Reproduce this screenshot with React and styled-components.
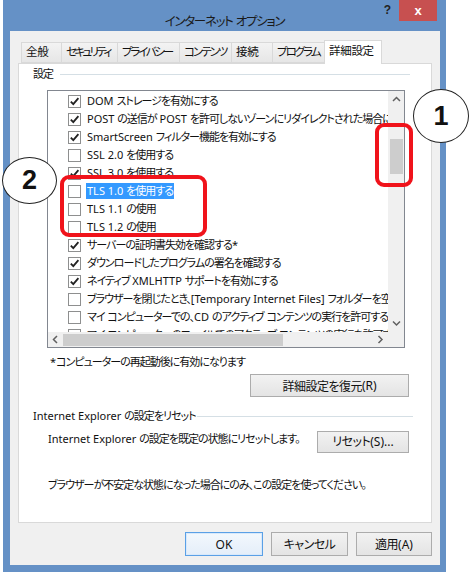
import React from 'react';
import styled, { createGlobalStyle } from 'styled-components';

const GlobalStyle = createGlobalStyle`
  body {
    margin: 0;
    background: #fff;
    font-family: 'Noto Sans', 'Noto Sans CJK JP', sans-serif;
    font-feature-settings: 'palt';
    color: #111;
  }
`;

const Stage = styled.div`
  position: relative;
  width: 473px;
  height: 574px;
  overflow: hidden;
  background: #fff;
`;

const Window = styled.div`
  margin-left: 3px;
  width: 443px;
  height: 572px;
  background: #6591c6;
  display: flex;
  flex-direction: column;
  padding-bottom: 7px;
  box-sizing: border-box;
`;

const TitleBar = styled.div`
  height: 31px;
  display: grid;
  grid-template-columns: 1fr auto 1fr;
  align-items: start;
`;

const Title = styled.div`
  grid-column: 2;
  padding-top: 13px;
  font-size: 12.5px;
  --jp: -1.3px;
  line-height: 18px;
  color: #1a1a1a;
`;

const Controls = styled.div`
  grid-column: 3;
  justify-self: end;
  display: flex;
  align-items: flex-start;
  gap: 8px;
  padding-right: 9px;
`;

const HelpGlyph = styled.span`
  font-family: 'Liberation Sans', sans-serif;
  font-weight: bold;
  font-size: 12px;
  line-height: 20px;
  color: #222;
`;

const CloseButton = styled.div`
  width: 38px;
  height: 21px;
  background: #c75050;
  color: #fff;
  display: flex;
  align-items: center;
  justify-content: center;
  font-family: 'Liberation Sans', sans-serif;
  font-weight: bold;
  font-size: 13px;
`;

const Jp = styled.span`
  letter-spacing: var(--jp, -1px);
`;

const Body = styled.div`
  flex: 1;
  margin: 0 6px 0 7px;
  background: #f0f0f0;
  padding: 9px 8px 9px 8px;
  display: flex;
  flex-direction: column;
  font-size: 11px;
`;

const TabRow = styled.div`
  height: 23px;
  display: flex;
  align-items: flex-end;
  padding-left: 4px;
  position: relative;
  z-index: 1;
`;

const Tab = styled.div`
  width: ${p => p.$w}px;
  height: ${p => (p.$active ? 24 : 21)}px;
  box-sizing: border-box;
  border: 1px solid #d9d9d9;
  border-bottom: ${p => (p.$active ? 'none' : '1px solid #d9d9d9')};
  margin-left: -1px;
  margin-bottom: ${p => (p.$active ? '-1px' : '0')};
  background: ${p => (p.$active ? '#fff' : 'linear-gradient(#f3f3f3, #e6e6e6)')};
  font-size: 11.5px;
  --jp: ${p => p.$track}px;
  line-height: ${p => (p.$active ? 20 : 18)}px;
  padding-left: 4px;
  white-space: nowrap;
`;

const Panel = styled.div`
  height: 460px;
  box-sizing: border-box;
  border: 1px solid #d9d9d9;
  background: #fff;
  display: flex;
  flex-direction: column;
  padding-top: 2px;
`;

const GroupHeader = styled.div`
  display: flex;
  align-items: center;
  gap: ${p => p.$gap || 7}px;
  padding-left: 14px;
  margin-right: ${p => p.$right}px;
  margin-top: ${p => p.$top || 0}px;
  line-height: 16px;
  white-space: nowrap;
  &::after {
    content: '';
    flex: 1;
    height: 1px;
    background: #d5dfe5;
  }
`;

const ListBox = styled.div`
  margin: 8px 0 0 28px;
  width: 358px;
  height: 258px;
  box-sizing: border-box;
  border: 1px solid #828790;
  display: grid;
  grid-template-columns: 1fr 16px;
  grid-template-rows: 1fr 15px;
  overflow: hidden;
`;

const Viewport = styled.div`
  overflow: hidden;
  padding: 1px 0 0 20px;
`;

const Row = styled.div`
  height: 18px;
  display: flex;
  align-items: center;
  gap: 5px;
  white-space: nowrap;
`;

const Box = styled.span`
  flex: none;
  width: 13px;
  height: 13px;
  box-sizing: border-box;
  border: 1px solid #8e8f8f;
  background: #fff;
  display: flex;
  align-items: center;
  justify-content: center;
`;

const Label = styled.span`
  line-height: 16px;
  padding: 0 1px;
  background: ${p => (p.$selected ? '#3399ff' : 'transparent')};
  color: ${p => (p.$selected ? '#fff' : '#111')};
`;

const VScroll = styled.div`
  background: #f0f0f0;
  display: flex;
  flex-direction: column;
  align-items: center;
`;

const HScroll = styled.div`
  background: #f0f0f0;
  display: flex;
  align-items: center;
`;

const Corner = styled.div`
  background: #f0f0f0;
`;

const ArrowCell = styled.div`
  flex: none;
  width: ${p => p.$w}px;
  height: ${p => p.$h}px;
  display: flex;
  align-items: center;
  justify-content: center;
`;

const Spacer = styled.div`
  flex: 1;
`;

const VThumb = styled.div`
  width: 13px;
  height: 35px;
  margin-top: 31px;
  background: #cdcdcd;
`;

const HThumb = styled.div`
  width: 220px;
  height: 12px;
  background: #cdcdcd;
`;

const Note = styled.div`
  margin: 6px 0 0 31px;
  line-height: 16px;
`;

const Button = styled.div`
  width: ${p => p.$w}px;
  height: ${p => p.$h || 23}px;
  box-sizing: border-box;
  border: 1px solid ${p => (p.$primary ? '#5aa0e6' : '#acacac')};
  background: ${p => (p.$primary ? 'linear-gradient(#f3f8fd, #e4eef9)' : 'linear-gradient(#f2f2f2, #e4e4e4)')};
  box-shadow: ${p => (p.$primary ? 'inset 0 0 0 1px #d8e9fb' : 'none')};
  display: flex;
  align-items: center;
  justify-content: center;
  font-size: 12px;
  --jp: -0.5px;
  color: #111;
  flex: none;
`;

const RestoreButton = styled(Button)`
  align-self: flex-end;
  margin: 4px 22px 0 0;
`;

const ResetRow = styled.div`
  display: flex;
  justify-content: space-between;
  align-items: flex-start;
  margin: 7px 22px 0 29px;
  line-height: 16px;
`;

const Warning = styled.div`
  margin: 24px 0 0 29px;
  line-height: 16px;
`;

const ButtonRow = styled.div`
  display: flex;
  justify-content: flex-end;
  gap: 8px;
  margin-top: 9px;
`;

const Bubble = styled.div`
  position: absolute;
  left: ${p => p.$x}px;
  top: ${p => p.$y}px;
  width: ${p => p.$w}px;
  height: ${p => p.$h}px;
  box-sizing: border-box;
  border: 1px solid #222;
  border-radius: 50%;
  background: #fff;
  display: flex;
  align-items: center;
  justify-content: center;
  font-family: 'Liberation Sans', Arial, sans-serif;
  font-weight: bold;
  font-size: 27px;
  color: #111;
`;

const Marker = styled.div`
  position: absolute;
  left: ${p => p.$x}px;
  top: ${p => p.$y}px;
  width: ${p => p.$w}px;
  height: ${p => p.$h}px;
  box-sizing: border-box;
  border: 4px solid #f0131b;
  border-radius: 9px;
`;

// Japanese runs get tighter tracking than the Latin words around them
const CJK = /([\u3000-\u30ff\u4e00-\u9fff\uff00-\uffef]+)/;
const T = ({ children }) =>
  children.split(CJK).map((part, i) => (i % 2 ? <Jp key={i}>{part}</Jp> : part));

// name, width, tracking
const tabs = [
  ['全般', 41, -0.3],
  ['セキュリティ', 57, -2.6],
  ['プライバシー', 63, -2.2],
  ['コンテンツ', 53, -2],
  ['接続', 42, -0.3],
  ['プログラム', 53, -2],
  ['詳細設定', 58, -0.3],
];

const settings = [
  ['DOM ストレージを有効にする', true],
  ['POST の送信が POST を許可しないゾーンにリダイレクトされた場合に警告する', true],
  ['SmartScreen フィルター機能を有効にする', true],
  ['SSL 2.0 を使用する', false],
  ['SSL 3.0 を使用する', true],
  ['TLS 1.0 を使用する', false, true],
  ['TLS 1.1 の使用', false],
  ['TLS 1.2 の使用', false],
  ['サーバーの証明書失効を確認する*', true],
  ['ダウンロードしたプログラムの署名を確認する', true],
  ['ネイティブ XMLHTTP サポートを有効にする', true],
  ['ブラウザーを閉じたとき、[Temporary Internet Files] フォルダーを空にする', false],
  ['マイ コンピューターでの、CD のアクティブ コンテンツの実行を許可する*', false],
  ['マイ コンピューターのファイルでのアクティブ コンテンツの実行を許可する*', false],
];

// small scrollbar chevrons
const Chevron = ({ dir }) => {
  const pts = {
    up: '1,5 4.5,1.5 8,5',
    down: '1,1.5 4.5,5 8,1.5',
    left: '5,1 1.5,4.5 5,8',
    right: '1.5,1 5,4.5 1.5,8',
  }[dir];
  const wide = dir === 'up' || dir === 'down';
  return (
    <svg width={wide ? 9 : 7} height={wide ? 7 : 9} viewBox={wide ? '0 0 9 7' : '0 0 7 9'}>
      <polyline points={pts} fill="none" stroke="#606060" strokeWidth="1.5" />
    </svg>
  );
};

const Check = () => (
  <svg width="11" height="11" viewBox="0 0 11 11">
    <polyline points="1.8,5.6 4.3,8.2 9.4,2.2" fill="none" stroke="#222" strokeWidth="1.8" />
  </svg>
);

export default function App() {
  return (
    <Stage>
      <GlobalStyle />
      <Window>
        <TitleBar>
          <Title><T>インターネット オプション</T></Title>
          <Controls>
            <HelpGlyph>?</HelpGlyph>
            <CloseButton>x</CloseButton>
          </Controls>
        </TitleBar>
        <Body>
          <TabRow>
            {tabs.map(([name, w, track], i) => (
              <Tab key={name} $w={w} $track={track} $active={i === tabs.length - 1}><T>{name}</T></Tab>
            ))}
          </TabRow>
          <Panel>
            <GroupHeader $right={21}><span><T>設定</T></span></GroupHeader>
            <ListBox>
              <Viewport>
                {settings.map(([text, checked, selected]) => (
                  <Row key={text}>
                    <Box>{checked && <Check />}</Box>
                    <Label $selected={selected}><T>{text}</T></Label>
                  </Row>
                ))}
              </Viewport>
              <VScroll>
                <ArrowCell $w={16} $h={17}><Chevron dir="up" /></ArrowCell>
                <VThumb />
                <Spacer />
                <ArrowCell $w={16} $h={17}><Chevron dir="down" /></ArrowCell>
              </VScroll>
              <HScroll>
                <ArrowCell $w={15} $h={15}><Chevron dir="left" /></ArrowCell>
                <HThumb />
                <Spacer />
                <ArrowCell $w={16} $h={15}><Chevron dir="right" /></ArrowCell>
              </HScroll>
              <Corner />
            </ListBox>
            <Note><T>*コンピューターの再起動後に有効になります</T></Note>
            <RestoreButton $w={159}><T>詳細設定を復元(R)</T></RestoreButton>
            <GroupHeader $right={18} $top={11} $gap={1}>
              <span><T>Internet Explorer の設定をリセット</T></span>
            </GroupHeader>
            <ResetRow>
              <span><T>Internet Explorer の設定を既定の状態にリセットします。</T></span>
              <Button $w={92} $h={22}><T>リセット(S)...</T></Button>
            </ResetRow>
            <Warning><T>ブラウザーが不安定な状態になった場合にのみ、この設定を使ってください。</T></Warning>
          </Panel>
          <ButtonRow>
            <Button $w={78} $h={24} $primary>OK</Button>
            <Button $w={77} $h={24}><T>キャンセル</T></Button>
            <Button $w={76} $h={24}><T>適用(A)</T></Button>
          </ButtonRow>
        </Body>
      </Window>
      <Marker $x={375} $y={123} $w={38} $h={64} />
      <Marker $x={60} $y={175} $w={147} $h={62} />
      <Bubble $x={413} $y={89} $w={56} $h={54}>1</Bubble>
      <Bubble $x={2} $y={157} $w={55} $h={47}>2</Bubble>
    </Stage>
  );
}
